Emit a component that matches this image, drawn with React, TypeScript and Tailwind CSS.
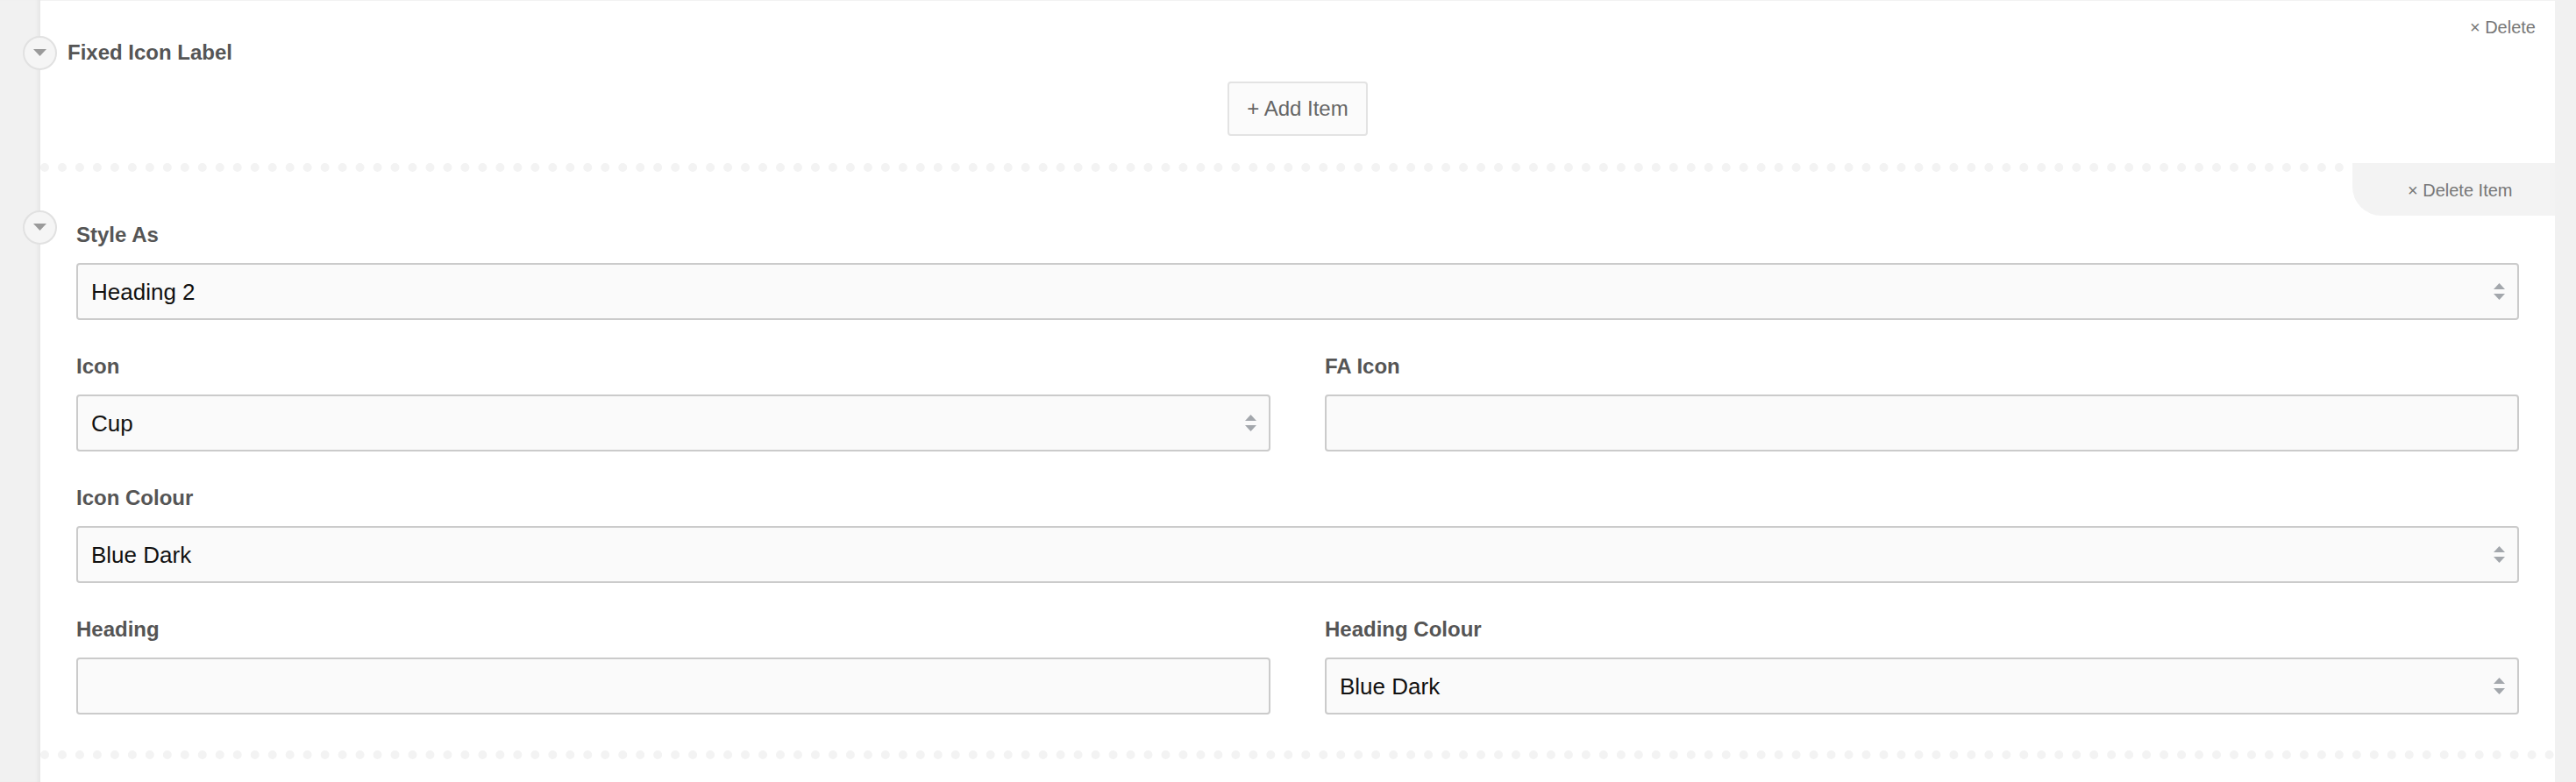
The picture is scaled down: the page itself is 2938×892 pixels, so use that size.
import type { ReactNode } from 'react';

// Collapse toggle sitting on the panel's left edge
function Toggle({ className = '' }: { className?: string }) {
  return (
    <span
      className={`flex h-[39px] w-[39px] items-center justify-center rounded-full border-2 border-[#e1e1e1] bg-[#f5f5f5] ${className}`}
    >
      <svg width="15" height="8" viewBox="0 0 15 8" className="-mt-[2px]">
        <polygon points="0,0 15,0 7.5,8" fill="#9a9a9a" />
      </svg>
    </span>
  );
}

function SelectArrows() {
  return (
    <svg width="13" height="20" viewBox="0 0 13 20" className="shrink-0">
      <polygon points="6.5,0 13,7 0,7" fill="#a3a7ac" />
      <polygon points="0,12 13,12 6.5,19" fill="#a3a7ac" />
    </svg>
  );
}

function Field({ label, children, wide }: { label: string; children: ReactNode; wide?: boolean }) {
  return (
    <div className={wide ? 'col-span-2' : ''}>
      <div className="mb-[14px] text-[24px] font-bold leading-[36px] text-[#555]">{label}</div>
      {children}
    </div>
  );
}

function Select({ value }: { value: string }) {
  return (
    <div className="flex h-[65px] items-center justify-between rounded-[4px] border-2 border-[#cbcbcb] bg-[#fafafa] pl-[15px] pr-[14px]">
      <span className="pt-[1px] text-[26px] text-[#111]">{value}</span>
      <SelectArrows />
    </div>
  );
}

function TextInput() {
  return <div className="h-[65px] rounded-[4px] border-2 border-[#cbcbcb] bg-[#fafafa]" />;
}

export default function App() {
  return (
    <div className="flex h-[892px] w-full bg-[#f1f1f1] font-['Liberation_Sans',Arial,Helvetica,sans-serif]">
      <div className="w-[46px] shrink-0 shadow-[inset_-5px_0_5px_-3px_rgba(0,0,0,0.06)]" />

      <div className="flex flex-1 flex-col border-t border-[#f2f2f2] bg-white">
        {/* repeater header */}
        <div className="relative h-[185px] pt-[40px]">
          <div className="flex items-center">
            <Toggle className="-ml-[20px]" />
            <span className="-mt-[2px] ml-[12px] text-[24px] font-bold leading-[36px] text-[#555]">
              Fixed Icon Label
            </span>
          </div>
          <button className="absolute right-[22px] top-[18px] text-[20px] leading-[24px] text-[#777]">
            × Delete
          </button>
          <div className="mt-[13px] flex justify-center">
            <button className="h-[62px] rounded-[4px] border-2 border-[#e3e3e3] bg-[#fbfbfb] px-[20px] text-[24px] text-[#666]">
              + Add Item
            </button>
          </div>
        </div>

        {/* repeater item */}
        <div className="relative border-t-[10px] border-dotted border-[#f3f3f3] px-[41px] pb-[41px] pt-[54px]">
          <Toggle className="absolute -left-[20px] top-[44px]" />
          <div className="absolute -top-[10px] right-0 flex h-[60px] w-[231px] items-center rounded-bl-[33px] bg-[#f3f3f3] pl-[63px] pt-[2px] text-[20px] text-[#777]">
            × Delete Item
          </div>

          <div className="grid grid-cols-2 gap-x-[62px] gap-y-[35px]">
            <Field label="Style As" wide>
              <Select value="Heading 2" />
            </Field>
            <Field label="Icon">
              <Select value="Cup" />
            </Field>
            <Field label="FA Icon">
              <TextInput />
            </Field>
            <Field label="Icon Colour" wide>
              <Select value="Blue Dark" />
            </Field>
            <Field label="Heading">
              <TextInput />
            </Field>
            <Field label="Heading Colour">
              <Select value="Blue Dark" />
            </Field>
          </div>
        </div>

        <div className="flex-1 border-t-[10px] border-dotted border-[#f3f3f3]" />
      </div>

      <div className="w-[24px] shrink-0" />
    </div>
  );
}
